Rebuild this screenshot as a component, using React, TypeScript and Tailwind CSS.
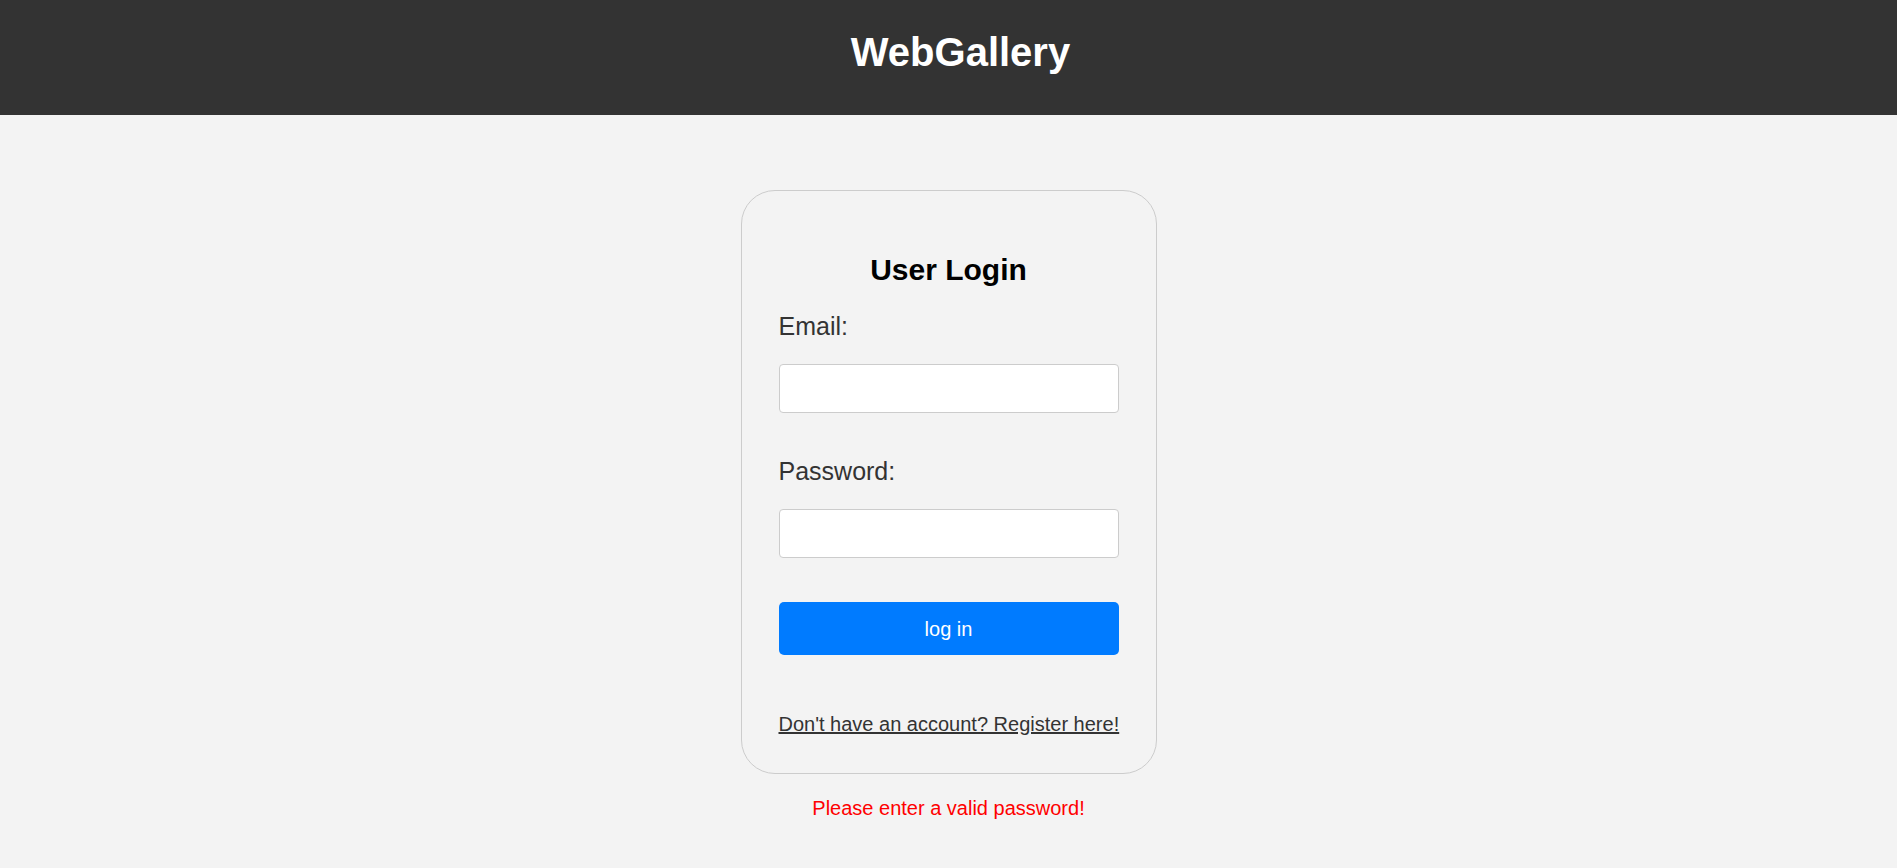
import React from "react";

export default function App() {
  return (
    <div
      className="min-h-[868px] w-full bg-[#f3f3f3]"
      style={{ fontFamily: '"Liberation Sans", Arial, sans-serif' }}
    >
      <header className="h-[115px] bg-[#333333] pt-[32px] pl-[24px]">
        <h1 className="text-center text-[40px] font-bold leading-none text-white">WebGallery</h1>
      </header>
      <main className="flex flex-col items-center pt-[75px]">
        <div className="flex w-[416px] flex-col rounded-[34px] border border-[#cccccc] bg-[#f3f3f3] px-[37px] pt-[64px] pb-[39px]">
          <h2 className="text-center text-[30px] font-bold leading-none text-black">User Login</h2>
          <label className="mt-[29px] text-[25px] leading-none text-[#333333]">Email:</label>
          <input
            type="email"
            className="mt-[25px] h-[49px] w-full rounded-[4px] border border-[#cccccc] bg-white outline-none"
          />
          <label className="mt-[46px] text-[25px] leading-none text-[#333333]">Password:</label>
          <input
            type="password"
            className="mt-[25px] h-[49px] w-full rounded-[4px] border border-[#cccccc] bg-white outline-none"
          />
          <button className="mt-[44px] h-[53px] w-full rounded-[5px] bg-[#007bff] text-[20px] leading-none text-white">
            log in
          </button>
          <a
            href="#"
            className="mt-[59px] whitespace-nowrap text-[20px] leading-none text-[#333333] underline"
          >
            Don't have an account? Register here!
          </a>
        </div>
        <p className="mt-[24px] text-[20px] leading-none text-[#ff0000]">Please enter a valid password!</p>
      </main>
    </div>
  );
}
